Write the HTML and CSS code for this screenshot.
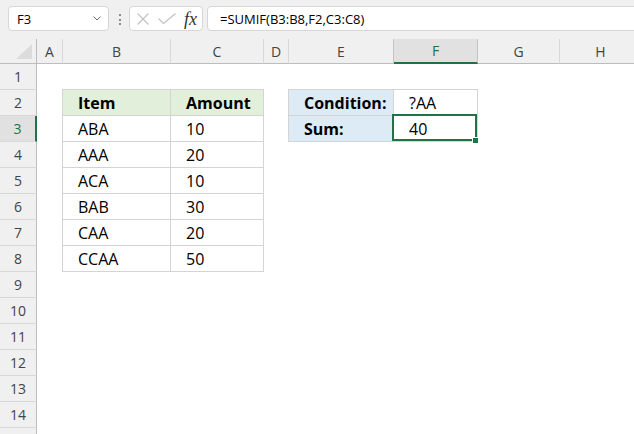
FILE: index.html
```html
<!DOCTYPE html>
<html lang="en">
<head>
  <meta charset="UTF-8">
  <meta name="viewport" content="width=device-width, initial-scale=1.0">
  <title>SUMIF wildcard</title>
  <link rel="stylesheet" href="styles.css">
</head>
<body>
  <div class="toolbar">
    <div class="namebox">
      <span>F3</span>
      <svg class="chevron" width="8" height="5" viewBox="0 0 8 5"><path d="M0.5 0.5 L4 4 L7.5 0.5" fill="none" stroke="#6b6b6b" stroke-width="1"/></svg>
    </div>
    <div class="grip"><i></i><i></i><i></i></div>
    <div class="fx-buttons">
      <svg width="12" height="12" viewBox="0 0 12 12"><path d="M0.5 0.5 L11.5 11.5 M11.5 0.5 L0.5 11.5" stroke="#c2c2c2" stroke-width="1.2" fill="none"/></svg>
      <svg width="18" height="11" viewBox="0 0 18 11"><path d="M0.5 5.5 L5.5 10.5 L17.5 0.5" stroke="#c2c2c2" stroke-width="1.2" fill="none"/></svg>
      <span class="fx">fx</span>
    </div>
    <div class="formula">=SUMIF(B3:B8,F2,C3:C8)</div>
  </div>

  <div class="sheet">
    <div class="corner">
      <svg width="16" height="15" viewBox="0 0 16 15"><path d="M0 15 L16 15 L16 0 Z" fill="#dcdcdc"/></svg>
    </div>
    <div class="col-head">A</div>
    <div class="col-head">B</div>
    <div class="col-head">C</div>
    <div class="col-head">D</div>
    <div class="col-head">E</div>
    <div class="col-head selected">F</div>
    <div class="col-head">G</div>
    <div class="col-head">H</div>
    <div class="col-head"></div>

    <div class="row-head">1</div>
    <div class="row-head">2</div>
    <div class="row-head selected">3</div>
    <div class="row-head">4</div>
    <div class="row-head">5</div>
    <div class="row-head">6</div>
    <div class="row-head">7</div>
    <div class="row-head">8</div>
    <div class="row-head">9</div>
    <div class="row-head">10</div>
    <div class="row-head">11</div>
    <div class="row-head">12</div>
    <div class="row-head">13</div>
    <div class="row-head">14</div>
    <div class="row-head"></div>

    <div class="data-table">
      <div class="cell head">Item</div>
      <div class="cell head">Amount</div>
      <div class="cell">ABA</div>
      <div class="cell">10</div>
      <div class="cell">AAA</div>
      <div class="cell">20</div>
      <div class="cell">ACA</div>
      <div class="cell">10</div>
      <div class="cell">BAB</div>
      <div class="cell">30</div>
      <div class="cell">CAA</div>
      <div class="cell">20</div>
      <div class="cell">CCAA</div>
      <div class="cell">50</div>
    </div>

    <div class="lookup">
      <div class="cell label">Condition:</div>
      <div class="cell">?AA</div>
      <div class="cell label">Sum:</div>
      <div class="cell active">40</div>
    </div>
  </div>
</body>
</html>
```

FILE: styles.css
```css
/* Page */
body {
  margin: 0;
  padding: 0;
  background-color: #ffffff;
  color: #000;
  font-family: "Open Sans", Arial, sans-serif;
  overflow: hidden;
  height: 434px;
}

/* Formula toolbar */
.toolbar {
  display: flex;
  align-items: flex-start;
  height: 39px;
  box-sizing: border-box;
  padding: 6px 0 0 8px;
  background-color: #f0f0f0;
  font-size: 13px;
  overflow: hidden;
}

.namebox {
  display: flex;
  align-items: center;
  justify-content: space-between;
  width: 101px;
  height: 25px;
  box-sizing: border-box;
  padding: 0 7px 0 8px;
  background-color: #fff;
  border: 1px solid #d6d6d6;
  border-radius: 4px;
}

.grip {
  display: flex;
  flex-direction: column;
  gap: 2.5px;
  margin: 8px 0 0 10px;
}

.grip i {
  display: block;
  width: 2px;
  height: 2px;
  background-color: #8c8c8c;
}

.fx-buttons {
  display: flex;
  align-items: center;
  gap: 9px;
  width: 74px;
  height: 25px;
  box-sizing: border-box;
  margin-left: 8px;
  padding-left: 7px;
  background-color: #fff;
  border: 1px solid #d6d6d6;
  border-radius: 4px;
}

.fx {
  font-family: "Liberation Serif", "DejaVu Serif", serif;
  font-style: italic;
  font-size: 18px;
  color: #333;
  margin-left: -1px;
  line-height: 1;
}

.formula {
  flex: 1;
  height: 25px;
  box-sizing: border-box;
  margin: 0 -10px 0 4px;
  padding: 3px 0 0 12px;
  background-color: #fff;
  border: 1px solid #d6d6d6;
  border-radius: 4px;
}

/* Worksheet grid */
.sheet {
  display: grid;
  grid-template-columns: 37px 26px 108px 93px 25px 105px 84px 82px 82px 1fr;
  grid-template-rows: 25px;
  grid-auto-rows: 26px;
  font-size: 16px;
}

.corner {
  display: flex;
  justify-content: flex-end;
  align-items: flex-end;
  padding: 0 4px 4px 0;
  background-color: #f0f0f0;
  border-right: 1px solid #bdbdbd;
  border-bottom: 1px solid #bdbdbd;
}

.col-head {
  display: flex;
  align-items: center;
  justify-content: center;
  background-color: #f0f0f0;
  border-right: 1px solid #d8d8d8;
  border-bottom: 1px solid #bdbdbd;
  color: #444;
  font-size: 14px;
}

.col-head.selected {
  background-color: #e1e1e1;
  border-right-color: #c6c6c6;
  border-bottom: 2px solid #217346;
  box-shadow: -1px 0 0 #c6c6c6;
  color: #217346;
}

.row-head {
  grid-column: 1;
  display: flex;
  align-items: center;
  justify-content: center;
  background-color: #f0f0f0;
  border-right: 1px solid #bdbdbd;
  border-bottom: 1px solid #d8d8d8;
  color: #444;
  font-size: 14px;
}

.row-head.selected {
  background-color: #e1e1e1;
  border-right: 2px solid #217346;
  color: #217346;
}

/* Source table B2:C8 */
.data-table {
  grid-column: 3 / 5;
  grid-row: 3 / 10;
  display: grid;
  grid-template-columns: 108px 93px;
  grid-auto-rows: 26px;
  margin: -1px 0 0 -1px;
  border-top: 1px solid #d4d4d4;
  border-left: 1px solid #d4d4d4;
}

/* Condition / result E2:F3 */
.lookup {
  grid-column: 6 / 8;
  grid-row: 3 / 5;
  display: grid;
  grid-template-columns: 105px 84px;
  grid-auto-rows: 26px;
  margin: -1px 0 0 -1px;
  border-top: 1px solid #d4d4d4;
  border-left: 1px solid #d4d4d4;
}

.cell {
  position: relative;
  display: flex;
  align-items: center;
  padding: 1px 0 0 15px;
  border-right: 1px solid #d4d4d4;
  border-bottom: 1px solid #d4d4d4;
}

.head {
  background-color: #e2efda;
  font-weight: bold;
}

.label {
  background-color: #ddebf7;
  font-weight: bold;
}

/* Active cell outline and fill handle */
.active::after {
  content: "";
  position: absolute;
  top: -2px;
  left: -2px;
  right: 0;
  bottom: 0;
  border: 2px solid #217346;
}

.active::before {
  content: "";
  position: absolute;
  right: -1px;
  bottom: -2px;
  width: 5px;
  height: 5px;
  background-color: #217346;
  box-shadow: 0 0 0 1px #fff;
  z-index: 1;
}
```
